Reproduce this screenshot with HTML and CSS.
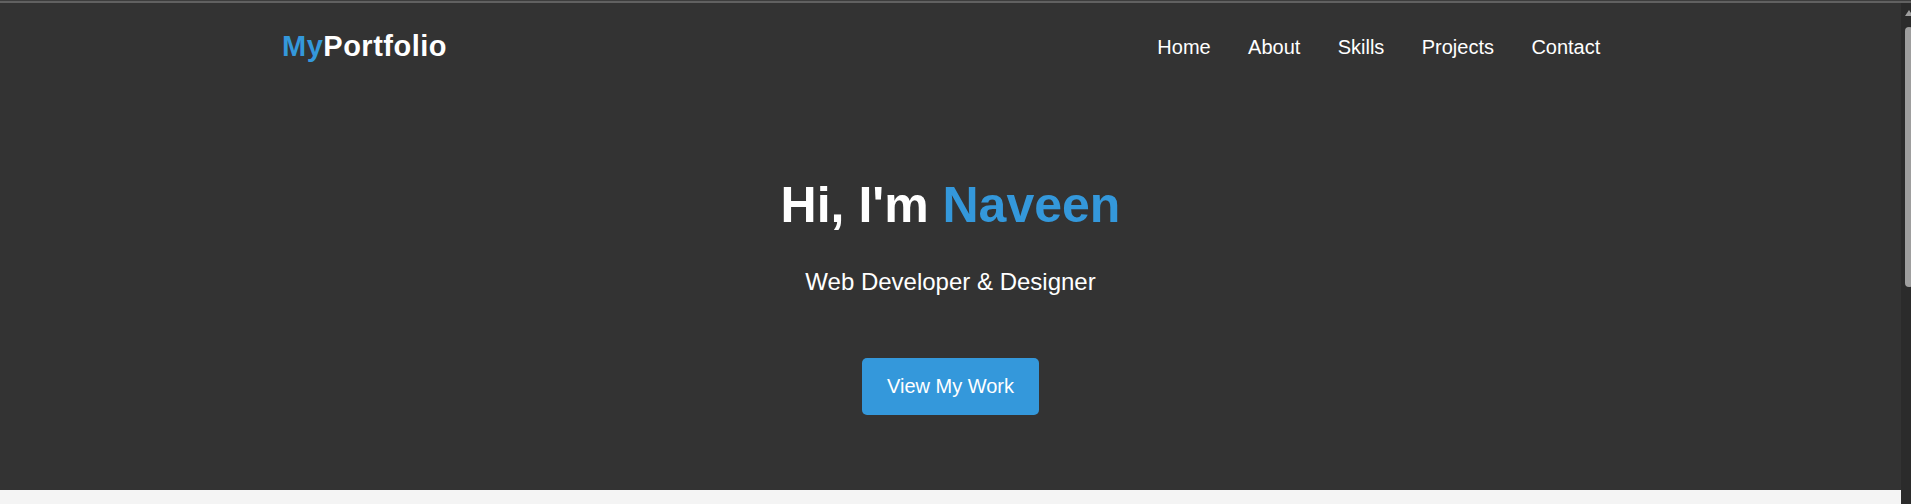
FILE: index.html
```html
<!DOCTYPE html>
<html lang="en">
<head>
<meta charset="utf-8">
<title>MyPortfolio</title>
<link rel="stylesheet" href="styles.css">
</head>
<body>
<div class="topline"></div>
<div class="frame">
  <div class="page">
    <header class="site-header">
      <div class="container header-inner">
        <a class="logo" href="#"><span class="accent">My</span>Portfolio</a>
        <nav>
          <ul class="nav-list">
            <li><a href="#">Home</a></li>
            <li><a href="#">About</a></li>
            <li><a href="#">Skills</a></li>
            <li><a href="#">Projects</a></li>
            <li><a href="#">Contact</a></li>
          </ul>
        </nav>
      </div>
    </header>
    <section class="hero">
      <h1 class="hero-title">Hi, I'm <span class="accent">Naveen</span></h1>
      <p class="hero-sub">Web Developer &amp; Designer</p>
      <a class="btn" href="#">View My Work</a>
    </section>
    <section class="next-section"></section>
  </div>
  <div class="scrollbar">
    <div class="sb-arrow"></div>
    <div class="sb-thumb"></div>
  </div>
</div>
</body>
</html>
```
FILE: styles.css
```css
* { box-sizing: border-box; }

html, body {
  margin: 0;
  padding: 0;
  height: 504px;
  overflow: hidden;
  background: #333333;
  font-family: "Liberation Sans", Arial, sans-serif;
  color: #ffffff;
}

.topline {
  height: 3px;
  background: #616161;
  border-top: 1px solid #3d3d3d;
}

.frame {
  display: flex;
  height: 501px;
}

.page {
  flex: 1;
  min-width: 0;
  display: flex;
  flex-direction: column;
  background: #333333;
}

.container {
  width: 1337px;
  margin: 0 auto;
}

.site-header {
  padding: 27px 0 25px;
}

.header-inner {
  display: flex;
  justify-content: space-between;
  align-items: center;
}

.logo {
  font-size: 29px;
  font-weight: 700;
  letter-spacing: 0.5px;
  color: #ffffff;
  text-decoration: none;
}

.accent { color: #3498db; }

.nav-list {
  display: flex;
  list-style: none;
  margin: 0;
  padding: 0;
}

.nav-list a {
  display: block;
  padding: 2px 18.7px 0;
  font-size: 20px;
  color: #ffffff;
  text-decoration: none;
}

.hero {
  height: 402px;
  flex-shrink: 0;
  display: flex;
  flex-direction: column;
  align-items: center;
  padding-top: 88px;
}

.hero-title {
  margin: 0 0 34px;
  font-size: 50px;
  font-weight: 700;
}

.hero-sub {
  margin: 0 0 62px;
  font-size: 24px;
}

.btn {
  display: block;
  padding: 17px 25px;
  font-size: 20px;
  background: #3498db;
  color: #ffffff;
  text-decoration: none;
  border-radius: 5px;
}

.next-section {
  flex: 1;
  background: #f4f4f4;
}

.scrollbar {
  width: 10px;
  background: #2b2b2b;
  display: flex;
  flex-direction: column;
  align-items: flex-start;
  padding-left: 4px;
}

.sb-arrow {
  margin-top: 7px;
  width: 0;
  height: 0;
  border-left: 4px solid transparent;
  border-right: 4px solid transparent;
  border-bottom: 6px solid #9e9e9e;
}

.sb-thumb {
  margin-top: 11px;
  width: 8px;
  height: 260px;
  background: #9e9e9e;
  border-radius: 4px;
}
```
